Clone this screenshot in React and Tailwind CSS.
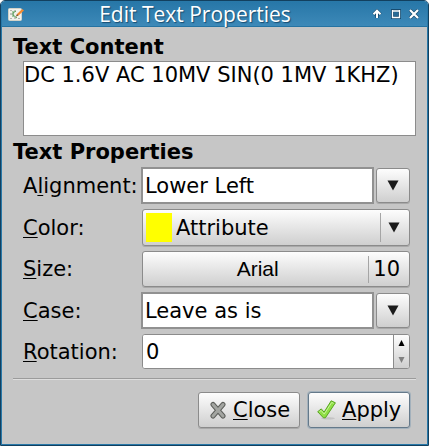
import React from "react";

const raised =
  "rounded-[3px] border border-[#8b8b8b] bg-linear-to-b from-[#fdfdfd] to-[#cfcfcf] shadow-[0_1px_0_#a9a9a9]";

function Mnemonic({ before = "", letter, after }) {
  return (
    <span>
      {before}
      <span className="underline decoration-1 underline-offset-2">{letter}</span>
      {after}
    </span>
  );
}

function DownArrow({ className = "" }) {
  return (
    <svg viewBox="0 0 12 11" className={`h-[11px] w-3 ${className}`} aria-hidden="true">
      <path d="M0.5 0.5h11L6 10.5z" fill="#1b1b1b" />
    </svg>
  );
}

function Row({ id, label, children, height = "h-[37px]" }) {
  return (
    <div className={`flex items-center ${height}`}>
      <label htmlFor={id} className="w-[118px] shrink-0 whitespace-nowrap">
        {label}
      </label>
      <div className="h-full min-w-0 grow">{children}</div>
    </div>
  );
}

function Combo({ id, options }) {
  return (
    <div className="grid h-full">
      <div className="col-start-1 row-start-1 flex gap-[2px]">
        <div className="grow border-2 border-[#919191] bg-white" />
        <div className={`my-px flex w-[34px] items-center justify-center ${raised}`}>
          <DownArrow />
        </div>
      </div>
      <select
        id={id}
        className="z-10 col-start-1 row-start-1 w-full appearance-none bg-transparent pl-1 outline-none"
      >
        {options.map((o) => (
          <option key={o}>{o}</option>
        ))}
      </select>
    </div>
  );
}

function AppIcon() {
  return (
    <svg viewBox="0 0 17 16" className="h-4 w-[17px]" aria-hidden="true">
      <rect x="0.5" y="2.5" width="13" height="12" rx="1" fill="#f1f1ec" stroke="#d2d2c8" />
      <path d="M2 8h4M7 4v2M7 11v2" stroke="#8a978a" fill="none" />
      <path d="M5 5v6M5 9l4 3M5 7l3-2" stroke="#58a05a" fill="none" />
      <path d="M2 4.5h2M2 12.5h2M10 12.5h2" stroke="#b4b4ac" />
      <path d="M8 10.5l1-2.6L14.2 2.9l1.8 1.6L10.5 9.5z" fill="#f28a30" />
      <path d="M8 10.5l1-2.4 1.4 1.5z" fill="#6b5848" />
    </svg>
  );
}

export default function App() {
  return (
    <div className="bg-white font-['DejaVu_Sans',sans-serif] text-[21px] leading-6 text-black">
      <section className="overflow-hidden rounded-t-[5px] border border-[#12405f]">
        <div className="border border-[#2878a8] bg-[#c6c6c6]">
          <header className="flex h-[25px] items-center border-b border-[#2573a2] bg-linear-to-b from-[#2777a8] to-[#3d89b8] pr-2 pl-[6px] text-white">
            <div className="flex w-[26px]">
              <AppIcon />
            </div>
            <h1 className="grow pr-4 text-center font-['Open_Sans','Noto_Sans',sans-serif] text-[21px] leading-6 whitespace-nowrap [text-shadow:1px_1px_1px_#174c70]">
              Edit Text Properties
            </h1>
            <div className="flex w-[47px] items-center justify-between">
              <button aria-label="Shade">
                <svg viewBox="0 0 10 10" className="block size-[10px]" aria-hidden="true">
                  <path d="M5 9V2M1.5 5.5L5 2l3.5 3.5" fill="none" stroke="#174c70" strokeWidth="3.5" />
                  <path d="M5 9V2M1.5 5.2L5 1.7l3.5 3.5" fill="none" stroke="#fff" strokeWidth="2" />
                </svg>
              </button>
              <button aria-label="Maximize">
                <svg viewBox="0 0 10 10" className="block size-[10px]" aria-hidden="true">
                  <rect x="1.5" y="1.5" width="7" height="7" fill="#286b96" stroke="#174c70" strokeWidth="3" />
                  <path d="M1 2h8M1.5 1v8M8.5 1v8M1 8.5h8" fill="none" stroke="#fff" strokeWidth="1.3" />
                </svg>
              </button>
              <button aria-label="Close window">
                <svg viewBox="0 0 10 10" className="block size-[10px]" aria-hidden="true">
                  <path d="M1 1l8 8M9 1L1 9" stroke="#174c70" strokeWidth="3.5" />
                  <path d="M1 1l8 8M9 1L1 9" stroke="#fff" strokeWidth="2.2" />
                </svg>
              </button>
            </div>
          </header>

          <form className="px-[11px] pt-2 pb-4" onSubmit={(e) => e.preventDefault()}>
            <label htmlFor="content" className="block font-bold">
              Text Content
            </label>
            <textarea
              id="content"
              defaultValue="DC 1.6V AC 10MV SIN(0 1MV 1KHZ)"
              className="mt-[2px] ml-[10px] block h-[75px] w-[calc(100%-10px)] resize-none overflow-hidden border border-[#8c8c8c] bg-white pt-px whitespace-nowrap outline-none"
            />
            <h2 className="mt-1 font-bold">Text Properties</h2>

            <div className="mt-[3px] flex flex-col gap-[5px] pr-[6px] pl-[10px]">
              <Row id="align" label={<Mnemonic before="A" letter="l" after="ignment:" />}>
                <Combo id="align" options={["Lower Left", "Lower Center", "Lower Right"]} />
              </Row>

              <Row id="color" label={<Mnemonic letter="C" after="olor:" />}>
                <div className="grid h-full">
                  <div className={`col-start-1 row-start-1 ml-px flex items-center pr-[9px] pl-[3px] ${raised}`}>
                    <span className="h-[29px] w-[26px] bg-[#ffff00]" />
                    <span className="ml-auto h-[29px] w-px bg-[#a5a5a5]" />
                    <DownArrow className="ml-[7px]" />
                  </div>
                  <select
                    id="color"
                    className="z-10 col-start-1 row-start-1 w-full appearance-none bg-transparent pl-[35px] outline-none"
                  >
                    <option>Attribute</option>
                    <option>Custom</option>
                  </select>
                </div>
              </Row>

              <Row id="font" height="h-9" label={<Mnemonic letter="S" after="ize:" />}>
                <button id="font" type="button" className={`ml-px flex h-full w-[calc(100%-1px)] items-center pr-[9px] ${raised}`}>
                  <span className="grow pl-1 text-center font-['Liberation_Sans',sans-serif]">Arial</span>
                  <span className="h-[27px] w-px bg-[#a5a5a5]" />
                  <span className="ml-1">10</span>
                </button>
              </Row>

              <Row id="case" label={<Mnemonic letter="C" after="ase:" />}>
                <Combo id="case" options={["Leave as is", "UPPER CASE", "lower case"]} />
              </Row>

              <Row id="rotation" height="h-[35px]" label={<Mnemonic letter="R" after="otation:" />}>
                <div className="ml-px flex h-full overflow-hidden rounded-[3px] border border-[#8b8b8b] bg-white">
                  <input
                    id="rotation"
                    type="text"
                    inputMode="numeric"
                    defaultValue="0"
                    className="w-0 min-w-0 grow bg-white pl-[3px] outline-none"
                  />
                  <div className="flex w-4 flex-col border-l border-[#8b8b8b] bg-linear-to-b from-[#fdfdfd] to-[#cfcfcf]">
                    <button type="button" aria-label="Increase rotation" className="flex grow items-center justify-center">
                      <svg viewBox="0 0 7 6" className="h-[6px] w-[7px]" aria-hidden="true">
                        <path d="M0.5 6h6L3.5 0z" fill="#000" />
                      </svg>
                    </button>
                    <button type="button" aria-label="Decrease rotation" className="flex grow items-center justify-center">
                      <svg viewBox="0 0 7 6" className="h-[6px] w-[7px]" aria-hidden="true">
                        <path d="M0.5 0h6L3.5 6z" fill="#808080" />
                      </svg>
                    </button>
                  </div>
                </div>
              </Row>
            </div>

            <hr className="mt-[9px] h-[2px] border-t border-b border-t-[#9b9b9b] border-b-[#dedede]" />

            <div className="mt-3 flex justify-end gap-2 pr-[6px]">
              <button type="button" className={`flex h-9 w-[102px] items-center gap-[6px] pl-[10px] ${raised}`}>
                <svg viewBox="0 0 18 18" className="size-[18px] shrink-0" aria-hidden="true">
                  <path d="M4 3.5l10 11.5M14 3.5l-10 11.5" stroke="#5d5f5b" strokeWidth="5" strokeLinecap="round" />
                  <path d="M4 3.5l10 11.5M14 3.5l-10 11.5" stroke="#a3a5a1" strokeWidth="3" strokeLinecap="round" />
                </svg>
                <Mnemonic letter="C" after="lose" />
              </button>
              <button
                type="submit"
                className="flex h-9 w-[102px] items-center gap-[6px] rounded-[3px] border border-[#64798a] bg-linear-to-b from-[#fdfdfd] to-[#cfcfcf] pl-[8px] shadow-[0_0_0_1px_#a3b1bc]"
              >
                <svg viewBox="0 0 19 20" className="h-5 w-[19px] shrink-0" aria-hidden="true">
                  <ellipse cx="11" cy="18.3" rx="7" ry="1.2" fill="#000" opacity="0.1" />
                  <path
                    d="M0.7 11.7l3.6-2.8 2.8 3.3L14.2 0.8l4.2 2L8.4 17.8H6.4z"
                    fill="#8fdf45"
                    stroke="#56a51f"
                    strokeLinejoin="round"
                  />
                  <path d="M2.4 11.8l1.7-1.3 3.1 3.6L14.8 2.4l1.8 1" fill="none" stroke="#c9f59b" />
                </svg>
                <Mnemonic letter="A" after="pply" />
              </button>
            </div>
          </form>
        </div>
      </section>
    </div>
  );
}
